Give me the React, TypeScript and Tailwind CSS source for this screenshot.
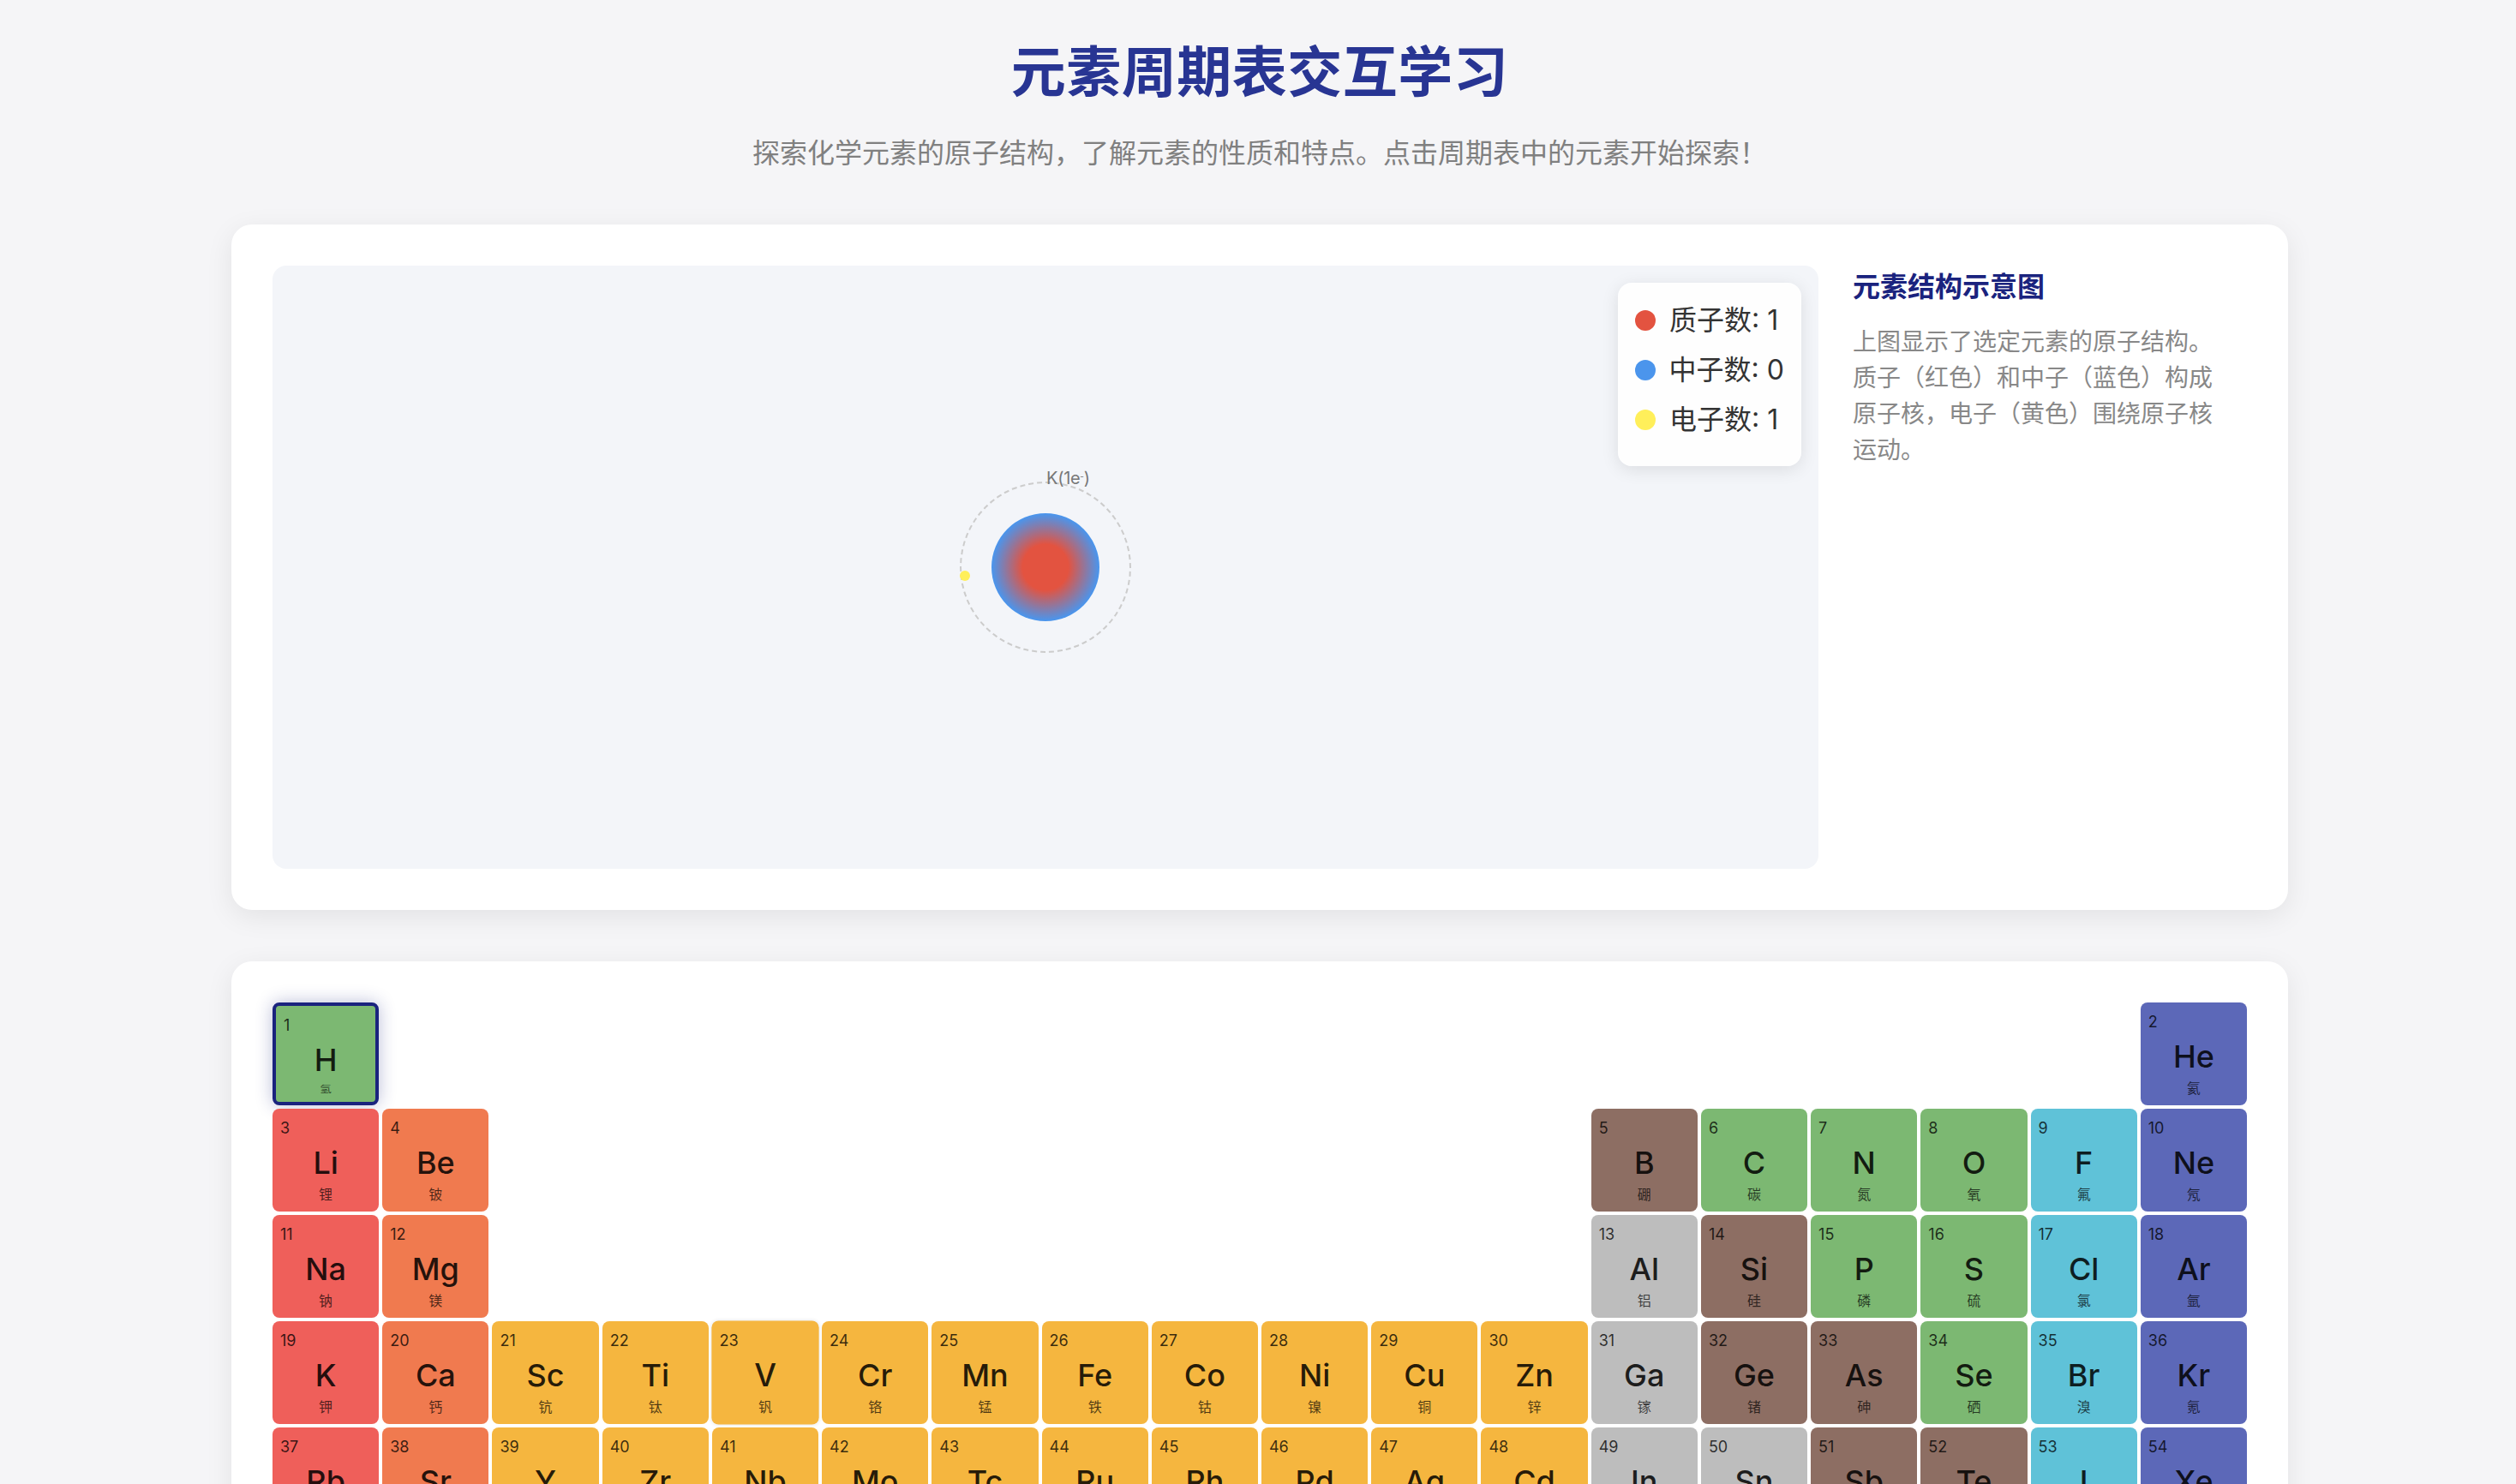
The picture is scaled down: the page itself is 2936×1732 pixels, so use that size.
import React from "react";

const CJK = "font-['Inter','Noto_Sans_CJK_SC',sans-serif]";

type Cat = "alkali" | "earth" | "transition" | "post" | "metalloid" | "nonmetal" | "halogen" | "noble";

const catStyle: Record<Cat, string> = {
  alkali: "bg-[#ef5f5a]",
  earth: "bg-[#f07a4f]",
  transition: "bg-[#f5b63f]",
  post: "bg-[#bdbdbd]",
  metalloid: "bg-[#8d6e63]",
  nonmetal: "bg-[#7cb872]",
  halogen: "bg-[#5fc2d8]",
  noble: "bg-[#5c68b8]",
};

interface El {
  n: number;
  s: string;
  name: string;
  col: number;
  cat: Cat;
}

const rows: El[][] = [
  [
    { n: 1, s: "H", name: "氢", col: 1, cat: "nonmetal" },
    { n: 2, s: "He", name: "氦", col: 18, cat: "noble" },
  ],
  [
    { n: 3, s: "Li", name: "锂", col: 1, cat: "alkali" },
    { n: 4, s: "Be", name: "铍", col: 2, cat: "earth" },
    { n: 5, s: "B", name: "硼", col: 13, cat: "metalloid" },
    { n: 6, s: "C", name: "碳", col: 14, cat: "nonmetal" },
    { n: 7, s: "N", name: "氮", col: 15, cat: "nonmetal" },
    { n: 8, s: "O", name: "氧", col: 16, cat: "nonmetal" },
    { n: 9, s: "F", name: "氟", col: 17, cat: "halogen" },
    { n: 10, s: "Ne", name: "氖", col: 18, cat: "noble" },
  ],
  [
    { n: 11, s: "Na", name: "钠", col: 1, cat: "alkali" },
    { n: 12, s: "Mg", name: "镁", col: 2, cat: "earth" },
    { n: 13, s: "Al", name: "铝", col: 13, cat: "post" },
    { n: 14, s: "Si", name: "硅", col: 14, cat: "metalloid" },
    { n: 15, s: "P", name: "磷", col: 15, cat: "nonmetal" },
    { n: 16, s: "S", name: "硫", col: 16, cat: "nonmetal" },
    { n: 17, s: "Cl", name: "氯", col: 17, cat: "halogen" },
    { n: 18, s: "Ar", name: "氩", col: 18, cat: "noble" },
  ],
  [
    { n: 19, s: "K", name: "钾", col: 1, cat: "alkali" },
    { n: 20, s: "Ca", name: "钙", col: 2, cat: "earth" },
    { n: 21, s: "Sc", name: "钪", col: 3, cat: "transition" },
    { n: 22, s: "Ti", name: "钛", col: 4, cat: "transition" },
    { n: 23, s: "V", name: "钒", col: 5, cat: "transition" },
    { n: 24, s: "Cr", name: "铬", col: 6, cat: "transition" },
    { n: 25, s: "Mn", name: "锰", col: 7, cat: "transition" },
    { n: 26, s: "Fe", name: "铁", col: 8, cat: "transition" },
    { n: 27, s: "Co", name: "钴", col: 9, cat: "transition" },
    { n: 28, s: "Ni", name: "镍", col: 10, cat: "transition" },
    { n: 29, s: "Cu", name: "铜", col: 11, cat: "transition" },
    { n: 30, s: "Zn", name: "锌", col: 12, cat: "transition" },
    { n: 31, s: "Ga", name: "镓", col: 13, cat: "post" },
    { n: 32, s: "Ge", name: "锗", col: 14, cat: "metalloid" },
    { n: 33, s: "As", name: "砷", col: 15, cat: "metalloid" },
    { n: 34, s: "Se", name: "硒", col: 16, cat: "nonmetal" },
    { n: 35, s: "Br", name: "溴", col: 17, cat: "halogen" },
    { n: 36, s: "Kr", name: "氪", col: 18, cat: "noble" },
  ],
  [
    { n: 37, s: "Rb", name: "铷", col: 1, cat: "alkali" },
    { n: 38, s: "Sr", name: "锶", col: 2, cat: "earth" },
    { n: 39, s: "Y", name: "钇", col: 3, cat: "transition" },
    { n: 40, s: "Zr", name: "锆", col: 4, cat: "transition" },
    { n: 41, s: "Nb", name: "铌", col: 5, cat: "transition" },
    { n: 42, s: "Mo", name: "钼", col: 6, cat: "transition" },
    { n: 43, s: "Tc", name: "锝", col: 7, cat: "transition" },
    { n: 44, s: "Ru", name: "钌", col: 8, cat: "transition" },
    { n: 45, s: "Rh", name: "铑", col: 9, cat: "transition" },
    { n: 46, s: "Pd", name: "钯", col: 10, cat: "transition" },
    { n: 47, s: "Ag", name: "银", col: 11, cat: "transition" },
    { n: 48, s: "Cd", name: "镉", col: 12, cat: "transition" },
    { n: 49, s: "In", name: "铟", col: 13, cat: "post" },
    { n: 50, s: "Sn", name: "锡", col: 14, cat: "post" },
    { n: 51, s: "Sb", name: "锑", col: 15, cat: "metalloid" },
    { n: 52, s: "Te", name: "碲", col: 16, cat: "metalloid" },
    { n: 53, s: "I", name: "碘", col: 17, cat: "halogen" },
    { n: 54, s: "Xe", name: "氙", col: 18, cat: "noble" },
  ],
];

function ElementCell({ el }: { el: El }) {
  const selected = el.n === 1;
  const hovered = el.n === 23;
  return (
    <div
      className={`relative flex h-[120px] flex-col items-center rounded-[8px] pt-[41px] text-black/85 ${catStyle[el.cat]} ${
        selected ? "border-4 border-[#1a237e] shadow-[0_0_20px_rgba(26,35,126,0.3)]" : ""
      } ${hovered ? "scale-[1.01] shadow-[0_0_4px_rgba(0,0,0,0.1)]" : ""}`}
      style={{ gridColumnStart: el.col }}
    >
      <span className="absolute top-[8px] left-[9px] text-[18px] leading-[30px] opacity-90">{el.n}</span>
      <span className="text-[36px] leading-[44px] font-[550]">{el.s}</span>
      {selected ? (
        <span className="scale-x-[0.85] scale-y-[0.65] text-[16px] leading-[24px] opacity-80">{el.name}</span>
      ) : (
        <span className="mt-[3px] text-[16px] leading-[24px] opacity-80">{el.name}</span>
      )}
    </div>
  );
}

function AtomModel() {
  return (
    <div className="relative flex-1 rounded-[16px] bg-[#f3f5f9]">
      <div className="absolute inset-0 flex items-center justify-center">
        <div className="relative flex size-[200px] items-center justify-center rounded-full border-2 border-dashed border-[#cccccc]">
          <div className="size-[126px] rounded-full bg-[radial-gradient(circle,#e35340_30%,#4b95ec_70%)]" />
          <span className="absolute top-[-16px] left-[99px] text-[20px] leading-[20px] tracking-[-0.3px] whitespace-nowrap text-[#777777]">
            K(1e<sup className="text-[10px]">-</sup>)
          </span>
          <div className="absolute top-[102px] left-[-2px] size-[12px] rounded-full bg-[#ffef5a]" />
        </div>
      </div>
      <div className="absolute top-[20px] right-[20px] w-[214px] rounded-[16px] bg-white/90 p-[20px] text-[32px] leading-[48px] whitespace-nowrap text-[#333333] shadow-[0_4px_20px_rgba(0,0,0,0.1)]">
        <div className="mb-[10px] flex items-center gap-[16px]">
          <span className="size-[24px] rounded-full bg-[#e35340]" />
          质子数: 1
        </div>
        <div className="mb-[10px] flex items-center gap-[16px]">
          <span className="size-[24px] rounded-full bg-[#4b95ec]" />
          中子数: 0
        </div>
        <div className="mb-[10px] flex items-center gap-[16px]">
          <span className="size-[24px] rounded-full bg-[#ffef5a]" />
          电子数: 1
        </div>
      </div>
    </div>
  );
}

export default function App() {
  return (
    <div className={`h-screen overflow-hidden bg-[#f5f5f7] ${CJK}`}>
      <div className="ml-[270px] w-[2400px]">
        <header className="pt-[40px] pb-[59px] text-center">
          <h1 className="text-[64px] leading-[88px] font-bold tracking-[0.5px] text-[#283593]">元素周期表交互学习</h1>
          <p className="mt-[27px] text-[32px] leading-[48px] text-[#808080]">
            探索化学元素的原子结构，了解元素的性质和特点。点击周期表中的元素开始探索！
          </p>
        </header>

        <section className="mb-[60px] flex h-[800px] rounded-[24px] bg-white p-[48px] shadow-[0_8px_32px_rgba(0,0,0,0.08)]">
          <AtomModel />
          <aside className="w-[500px] shrink-0 px-[40px]">
            <h3 className="pt-[1px] text-[32px] leading-[48px] font-bold text-[#1a237e]">元素结构示意图</h3>
            <p className="mt-[19px] text-[28px] leading-[42px] text-[#888888]">
              上图显示了选定元素的原子结构。质子（红色）和中子（蓝色）构成原子核，电子（黄色）围绕原子核运动。
            </p>
          </aside>
        </section>

        <section className="rounded-[24px] bg-white p-[48px] shadow-[0_8px_32px_rgba(0,0,0,0.08)]">
          <div className="grid grid-cols-[repeat(18,minmax(0,1fr))] gap-[4px]">
            {rows.map((row) => row.map((el) => <ElementCell key={el.n} el={el} />))}
          </div>
        </section>
      </div>
    </div>
  );
}
